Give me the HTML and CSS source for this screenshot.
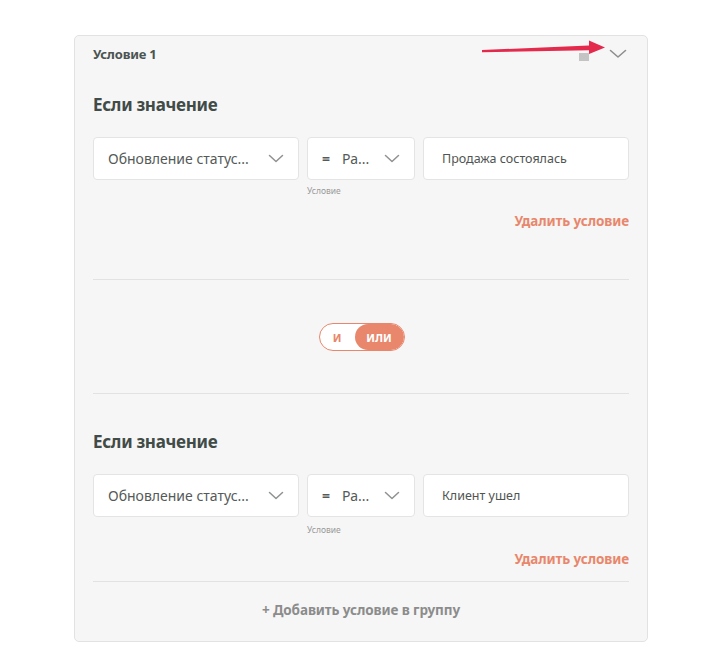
FILE: index.html
```html
<!DOCTYPE html>
<html lang="ru">
<head>
<meta charset="utf-8">
<link rel="stylesheet" href="styles.css">
</head>
<body>
<div class="page">
  <div class="card">
    <div class="card-head">
      <span class="card-title">Условие 1</span>
      <span class="head-tools">
        <span class="grip"></span>
        <svg class="chev-head" width="18" height="10" viewBox="0 0 18 10"><path d="M1.5 1.5 L9 8 L16.5 1.5" fill="none" stroke="#8d8f8e" stroke-width="1.6" stroke-linecap="round" stroke-linejoin="round"/></svg>
      </span>
      <svg class="annot-arrow" width="130" height="20" viewBox="0 0 130 20"><path d="M1 13.2 L108 11.2 L108 15 L124 8.5 L108 1.5 L108 6.5 L1 11 Z" fill="#e3294c"/></svg>
    </div>

    <div class="cond">
      <h2 class="cond-title">Если значение</h2>
      <div class="fields">
        <div class="field f-main"><span class="txt">Обновление статус...</span><svg class="chev" width="16" height="9" viewBox="0 0 16 9"><path d="M1.5 1.5 L8 7.5 L14.5 1.5" fill="none" stroke="#8f9291" stroke-width="1.5" stroke-linecap="round" stroke-linejoin="round"/></svg></div>
        <div class="field-col">
          <div class="field f-op"><span class="eq">=</span><span class="txt">Ра...</span><svg class="chev" width="16" height="9" viewBox="0 0 16 9"><path d="M1.5 1.5 L8 7.5 L14.5 1.5" fill="none" stroke="#8f9291" stroke-width="1.5" stroke-linecap="round" stroke-linejoin="round"/></svg></div>
          <span class="hint">Условие</span>
        </div>
        <div class="field f-val"><span class="val">Продажа состоялась</span></div>
      </div>
      <div class="del-row"><span class="del">Удалить условие</span></div>
    </div>

    <div class="sep sep-a"></div>
    <div class="toggle-row">
      <div class="toggle"><span class="opt">И</span><span class="opt on">ИЛИ</span></div>
    </div>
    <div class="sep sep-b"></div>

    <div class="cond cond-2">
      <h2 class="cond-title">Если значение</h2>
      <div class="fields">
        <div class="field f-main"><span class="txt">Обновление статус...</span><svg class="chev" width="16" height="9" viewBox="0 0 16 9"><path d="M1.5 1.5 L8 7.5 L14.5 1.5" fill="none" stroke="#8f9291" stroke-width="1.5" stroke-linecap="round" stroke-linejoin="round"/></svg></div>
        <div class="field-col">
          <div class="field f-op"><span class="eq">=</span><span class="txt">Ра...</span><svg class="chev" width="16" height="9" viewBox="0 0 16 9"><path d="M1.5 1.5 L8 7.5 L14.5 1.5" fill="none" stroke="#8f9291" stroke-width="1.5" stroke-linecap="round" stroke-linejoin="round"/></svg></div>
          <span class="hint">Условие</span>
        </div>
        <div class="field f-val"><span class="val">Клиент ушел</span></div>
      </div>
      <div class="del-row"><span class="del">Удалить условие</span></div>
    </div>

    <div class="sep sep-c"></div>
    <div class="add-row"><span class="add">+ Добавить условие в группу</span></div>
  </div>
</div>
</body>
</html>
```
FILE: styles.css
```css
* { box-sizing: border-box; }
html, body { margin: 0; padding: 0; background: #ffffff; }
body {
  font-family: "Noto Sans", "Open Sans", sans-serif;
  width: 718px;
  height: 669px;
  overflow: hidden;
}
.page {
  padding: 35px 0 0 74px;
}
.card {
  width: 574px;
  height: 607px;
  background: #f6f6f6;
  border: 1px solid #e2e2e2;
  border-radius: 5px;
  padding: 0 18px 0 18px;
}
.card-head {
  position: relative;
  display: flex;
  align-items: center;
  justify-content: space-between;
  height: 36px;
}
.card-title {
  font-size: 13px;
  font-weight: 700;
  color: #4b5451;
  letter-spacing: -0.2px;
}
.head-tools {
  display: flex;
  align-items: center;
  gap: 20px;
  margin-right: 2px;
}
.grip {
  width: 10px;
  height: 8px;
  background: #c4c4c4;
  margin-top: 5px;
}
.annot-arrow {
  position: absolute;
  left: 388px;
  top: 3px;
}
.cond { padding-top: 21px; }
.cond-2 { padding-top: 36px; }
.cond-title {
  margin: 0;
  font-size: 17px;
  font-weight: 700;
  color: #414b47;
  line-height: 24px;
  letter-spacing: -0.3px;
}
.fields {
  display: flex;
  gap: 8px;
  margin-top: 20px;
  align-items: flex-start;
}
.field {
  height: 43px;
  background: #ffffff;
  border: 1px solid #e4e4e4;
  border-radius: 4px;
  display: flex;
  align-items: center;
  padding: 0 14px;
}
.f-main { width: 206px; justify-content: space-between; }
.field-col { display: flex; flex-direction: column; }
.f-op { width: 108px; }
.f-val { width: 206px; padding-left: 18px; }
.txt {
  font-size: 14px;
  color: #555a58;
}
.eq {
  font-size: 14px;
  font-weight: 700;
  color: #555a58;
  margin-right: 12px;
}
.f-op .chev { margin-left: auto; }
.val {
  font-size: 12.5px;
  color: #505553;
}
.hint {
  font-size: 8.5px;
  color: #9a9a9a;
  margin-top: 5px;
  line-height: 12px;
}
.cond-2 .hint { margin-top: 7px; }
.del-row {
  display: flex;
  justify-content: flex-end;
  margin-top: 15px;
}
.cond-2 .del-row { margin-top: 14px; }
.del {
  font-size: 13.5px;
  font-weight: 700;
  color: #e8876c;
  letter-spacing: -0.1px;
}
.sep {
  height: 1px;
  background: #e2e2e2;
}
.sep-a { margin-top: 49px; }
.sep-c { margin-top: 13px; }
.toggle-row {
  display: flex;
  justify-content: center;
  height: 113px;
  padding-top: 43px;
}
.toggle {
  display: flex;
  width: 86px;
  height: 28px;
  border: 1px solid #e8876c;
  border-radius: 14px;
  overflow: hidden;
  background: #ffffff;
  margin-left: 1px;
}
.opt {
  flex: 1;
  display: flex;
  align-items: center;
  justify-content: center;
  font-size: 11px;
  font-weight: 700;
  color: #e8876c;
}
.opt.on {
  background: #e8876c;
  color: #ffffff;
  border-radius: 14px;
  flex: 0 0 49px;
}
.add-row {
  display: flex;
  justify-content: center;
  padding-top: 19px;
}
.add {
  font-size: 13.5px;
  font-weight: 700;
  color: #8c8c8c;
  letter-spacing: -0.1px;
}
```
